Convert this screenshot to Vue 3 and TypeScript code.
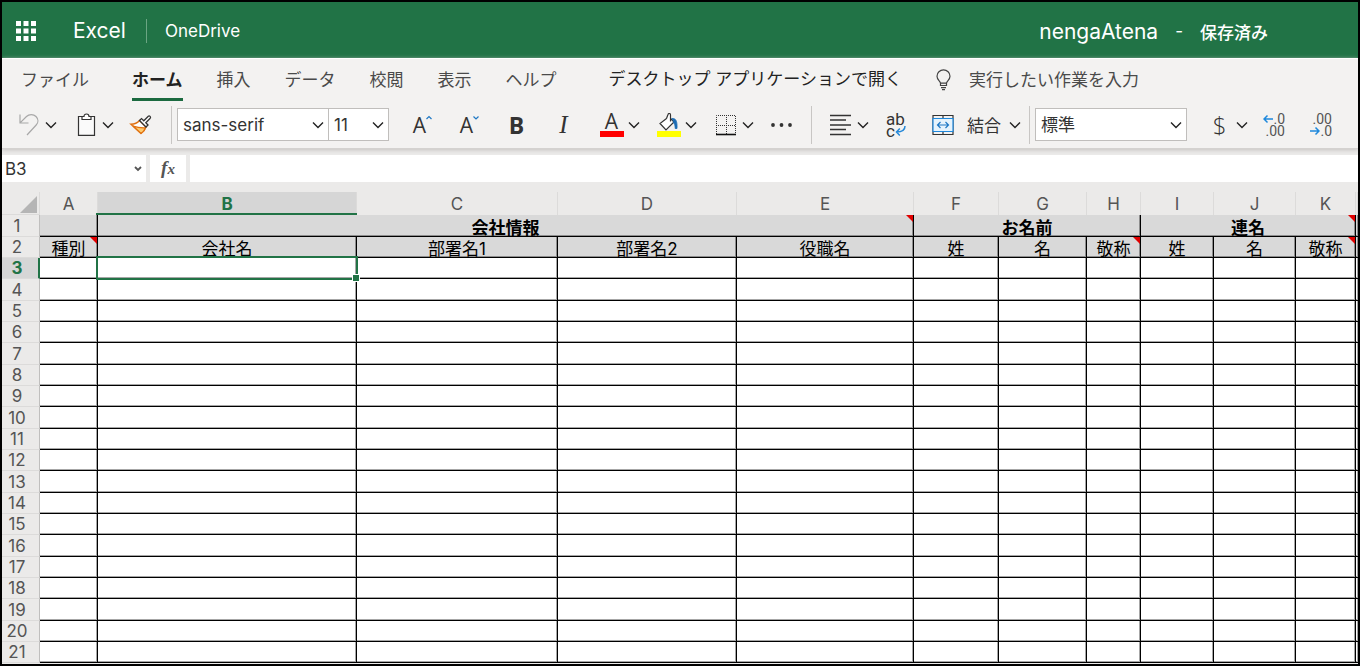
<script setup lang="ts">
import { ref } from 'vue'

interface HeadCell {
  text: string
  span: number
  note?: boolean
}

const tabs = ['ファイル', 'ホーム', '挿入', 'データ', '校閲', '表示', 'ヘルプ']
const activeTab = ref('ホーム')
const fontName = ref('sans-serif')
const fontSize = ref('11')
const format = ref('標準')
const cellName = ref('B3')
const formula = ref('')
const query = ref('')

const columns = ['A', 'B', 'C', 'D', 'E', 'F', 'G', 'H', 'I', 'J', 'K', '']
const groups: HeadCell[] = [
  { text: '', span: 1 },
  { text: '会社情報', span: 4, note: true },
  { text: 'お名前', span: 3 },
  { text: '連名', span: 3, note: true },
  { text: '', span: 1 },
]
const fields: HeadCell[] = [
  { text: '種別', span: 1, note: true },
  { text: '会社名', span: 1 },
  { text: '部署名1', span: 1 },
  { text: '部署名2', span: 1 },
  { text: '役職名', span: 1 },
  { text: '姓', span: 1 },
  { text: '名', span: 1 },
  { text: '敬称', span: 1, note: true },
  { text: '姓', span: 1 },
  { text: '名', span: 1 },
  { text: '敬称', span: 1, note: true },
  { text: '', span: 1 },
]
const bodyRows = Array.from({ length: 19 }, (_, i) => i + 3)
const isTall = (row: number): boolean => row % 3 === 1
</script>

<template>
  <div class="app">
    <header class="topbar">
      <button class="waffle" aria-label="アプリ起動ツール">
        <svg width="20" height="20" viewBox="0 0 20 20" fill="#fff">
          <g v-for="y in 3" :key="y">
            <rect v-for="x in 3" :key="x" :x="(x - 1) * 7.5" :y="(y - 1) * 7.5" width="5" height="5" />
          </g>
        </svg>
      </button>
      <a class="brand" href="#">Excel</a>
      <a class="drive" href="#">OneDrive</a>
      <div class="doc">
        <span class="doc-name">nengaAtena</span>
        <span class="dash">-</span>
        <span class="saved">保存済み</span>
      </div>
    </header>

    <div class="ribbon">
      <nav class="tabs">
        <button
          v-for="tab in tabs"
          :key="tab"
          class="tab"
          :class="{ active: tab === activeTab }"
          @click="activeTab = tab"
        >{{ tab }}</button>
        <a class="open" href="#">デスクトップ アプリケーションで開く</a>
        <label class="tell">
          <svg width="15" height="22" viewBox="0 0 15 22" fill="none" stroke="#444" stroke-width="1.2">
            <path d="M4.5 16.5 V14.2 C4.5 12.2 1 11 1 7.2 A6.5 6.3 0 0 1 14 7.2 C14 11 10.5 12.2 10.5 14.2 V16.5 Z M4.5 14.2 H10.5 M5 18.7 H10 M6 20.6 H9" />
          </svg>
          <input v-model="query" placeholder="実行したい作業を入力" aria-label="実行したい作業を入力" />
        </label>
      </nav>

      <div class="tools">
        <button class="split" aria-label="元に戻す">
          <svg class="icon" viewBox="0 0 24 24" fill="none" stroke="#a8a8a8" stroke-width="1.2">
            <path d="M3 1.500 V10 H11.500 M3.300 9.700 L9.500 3.500 C12 1 16.500 1 19 3.500 C21.500 6 21.500 9.500 19.200 12 L10 22" />
          </svg>
          <svg class="chev" viewBox="0 0 12 8"><path d="M1 1.500 L6 6.500 L11 1.500" /></svg>
        </button>
        <button class="split" aria-label="貼り付け">
          <svg class="icon" viewBox="0 0 24 24" fill="none" stroke="#333" stroke-width="1.2">
            <path d="M8 3.500 H4.500 V22.400 H20.500 V3.500 H17" fill="#fafafa" />
            <path d="M8 3.500 H10 C10 1.800 11 1 12.500 1 S15 1.800 15 3.500 H17 V6.500 H8 Z" fill="#fff" />
          </svg>
          <svg class="chev" viewBox="0 0 12 8"><path d="M1 1.500 L6 6.500 L11 1.500" /></svg>
        </button>
        <button class="narrow" aria-label="書式のコピー">
          <svg class="icon" viewBox="0 0 24 24" fill="none" stroke-width="1.300">
            <path d="M1.800 11.200 C5.500 11.200 8.500 10 10.500 7.500 L17 14 C16 17 14.500 19 12 20.500 Z" fill="#fff" stroke="#e07010" />
            <path d="M4 13 C8 14.500 12 15 16.500 14.800 C15.500 17.500 14 19.200 12 20.500 Z" fill="#fccb70" stroke="#e07010" />
            <path d="M10.500 7.500 L12.500 5.600 L14.800 7.800 L19.300 3.200 C20.500 2.300 22.200 4 21.200 5.200 L16.800 9.800 L19 12 L17 14 Z" fill="#fff" stroke="#333" />
          </svg>
        </button>
        <span class="rule"></span>
        <label class="pick font">
          <select v-model="fontName" aria-label="フォント"><option>sans-serif</option></select>
          <svg class="chev" viewBox="0 0 12 8"><path d="M1 1.500 L6 6.500 L11 1.500" /></svg>
        </label>
        <label class="pick size">
          <select v-model="fontSize" aria-label="フォント サイズ"><option>11</option></select>
          <svg class="chev" viewBox="0 0 12 8"><path d="M1 1.500 L6 6.500 L11 1.500" /></svg>
        </label>
        <div class="set">
          <button class="single glyph" aria-label="フォント サイズの拡大">
            A<svg class="mark" viewBox="0 0 6 20"><path d="M0.500 4 L3 1.500 L5.500 4" /></svg>
          </button>
          <button class="single glyph" aria-label="フォント サイズの縮小">
            A<svg class="mark" viewBox="0 0 6 20"><path d="M0.500 1.500 L3 4 L5.500 1.500" /></svg>
          </button>
          <button class="single bold">B</button>
          <button class="single italic">I</button>
        </div>
        <button class="split" aria-label="フォントの色">
          <span class="swatch"><span class="letter">A</span></span>
          <svg class="chev" viewBox="0 0 12 8"><path d="M1 1.500 L6 6.500 L11 1.500" /></svg>
        </button>
        <button class="split" aria-label="塗りつぶしの色">
          <svg class="icon" viewBox="0 0 24 24" fill="none" stroke="#333" stroke-width="1.200">
            <path d="M9.500 5.500 L3 10.500 L9 17 L17 9 L13.500 5.500 V2 C13.500 0 11.500 0 11 1.500 L9.500 5.500 M13.500 5.500 V8.500" fill="#fff" />
            <path d="M14.800 5.500 C18.500 5 20.500 7.500 20 15.500 H18.200 C18 11.500 17.500 10 16 9.500 L17 9 Z" fill="#1c6cb4" stroke="#1c6cb4" stroke-width="0.800" />
            <rect x="0" y="18" width="24" height="6" fill="#ff0" stroke="none" />
          </svg>
          <svg class="chev" viewBox="0 0 12 8"><path d="M1 1.500 L6 6.500 L11 1.500" /></svg>
        </button>
        <button class="split" aria-label="罫線">
          <svg class="icon" viewBox="0 0 24 24" fill="none" stroke="#333">
            <path d="M2.500 21 V2.500 H21.500 V21 M12.500 2 V21 M2 12.500 H22" stroke-dasharray="1 1" />
            <path d="M2 21.500 H22" stroke="#111" stroke-width="1.600" />
          </svg>
          <svg class="chev" viewBox="0 0 12 8"><path d="M1 1.500 L6 6.500 L11 1.500" /></svg>
        </button>
        <button class="narrow" aria-label="その他">
          <svg class="icon" viewBox="0 0 24 24" fill="#333">
            <circle cx="4" cy="12" r="1.900" /><circle cx="12.500" cy="12" r="1.900" /><circle cx="21" cy="12" r="1.900" />
          </svg>
        </button>
        <span class="rule"></span>
        <div class="set align">
          <button class="split" aria-label="配置">
            <svg class="icon" viewBox="0 0 24 24" stroke="#333" stroke-width="1.300">
              <path d="M1 2.500 H22 M1 7 H17 M1 12 H22 M1 16.500 H17 M1 21.500 H22" />
            </svg>
            <svg class="chev" viewBox="0 0 12 8"><path d="M1 1.500 L6 6.500 L11 1.500" /></svg>
          </button>
          <button class="narrow wrap" aria-label="折り返して全体を表示">
            <span>ab</span>
            <span>c<svg width="11" height="10" viewBox="0 0 11 10" fill="none" stroke="#2488d8" stroke-width="1.500">
              <path d="M10 0 C10 4 7.500 6 1.500 6 M4.800 2.600 L1.500 6 L4.800 9.400" />
            </svg></span>
          </button>
          <button class="merge">
            <svg class="icon" viewBox="0 0 24 24" fill="none" stroke="#333" stroke-width="1.200">
              <path d="M2 2.500 H22 V21.500 H2 Z M12 2.500 V6 M12 18 V21.500" />
              <path d="M2 5.500 H22 V18.500 H2 Z" fill="#e6f3fc" stroke="#1e88dc" />
              <path d="M6.500 12 H17.500 M9.500 9 L6.500 12 L9.500 15 M14.500 9 L17.500 12 L14.500 15" stroke="#1e78c4" />
            </svg>
            <span>結合</span>
            <svg class="chev" viewBox="0 0 12 8"><path d="M1 1.500 L6 6.500 L11 1.500" /></svg>
          </button>
        </div>
        <span class="rule tight"></span>
        <label class="pick format">
          <select v-model="format" aria-label="表示形式"><option>標準</option></select>
          <svg class="chev" viewBox="0 0 12 8"><path d="M1 1.500 L6 6.500 L11 1.500" /></svg>
        </label>
        <div class="set numbers">
          <button class="split" aria-label="通貨">
            <span class="dollar">$</span>
            <svg class="chev" viewBox="0 0 12 8"><path d="M1 1.500 L6 6.500 L11 1.500" /></svg>
          </button>
          <button class="narrow digits" aria-label="小数点以下の表示桁数を増やす">
            <span><svg width="10" height="10" viewBox="0 0 10 10"><path d="M10 5 H1 M4.500 1.500 L1 5 L4.500 8.500" /></svg>.0</span>
            <span>.00</span>
          </button>
          <button class="narrow digits" aria-label="小数点以下の表示桁数を減らす">
            <span>.00</span>
            <span><svg width="10" height="10" viewBox="0 0 10 10"><path d="M0 5 H9 M5.500 1.500 L9 5 L5.500 8.500" /></svg>.0</span>
          </button>
        </div>
      </div>
    </div>

    <div class="formula">
      <label class="name">
        <input v-model="cellName" aria-label="名前ボックス" />
        <svg width="8" height="6" viewBox="0 0 8 6" fill="none" stroke="#555" stroke-width="1.800"><path d="M1 1 L4 4 L7 1" /></svg>
      </label>
      <button class="fx" aria-label="関数の挿入"><i>f</i><i class="x">x</i></button>
      <input v-model="formula" class="entry" aria-label="数式バー" />
    </div>

    <main class="sheet">
      <table>
        <colgroup>
          <col class="c-row" />
          <col v-for="(c, i) in columns" :key="i" :class="'c-' + (c || 'rest')" />
        </colgroup>
        <thead>
          <tr>
            <th class="corner">
              <svg width="19" height="19" viewBox="0 0 19 19"><path d="M18 1 V18 H1 Z" fill="#b5b5b5" /></svg>
            </th>
            <th v-for="(c, i) in columns" :key="i" class="col" :class="{ picked: c === 'B' }" scope="col">{{ c }}</th>
          </tr>
        </thead>
        <tbody>
          <tr class="tall">
            <th class="row" scope="row">1</th>
            <td v-for="(g, i) in groups" :key="i" class="head strong" :colspan="g.span">
              <div class="clip">{{ g.text }}</div>
              <span v-if="g.note" class="note"></span>
            </td>
          </tr>
          <tr>
            <th class="row" scope="row">2</th>
            <td v-for="(f, i) in fields" :key="i" class="head">
              <div class="clip">{{ f.text }}</div>
              <span v-if="f.note" class="note"></span>
            </td>
          </tr>
          <tr v-for="r in bodyRows" :key="r" :class="{ tall: isTall(r) }">
            <th class="row" :class="{ picked: r === 3 }" scope="row">{{ r }}</th>
            <td v-for="(c, i) in columns" :key="i">
              <span v-if="r === 3 && c === 'B'" class="cursor"></span>
            </td>
          </tr>
        </tbody>
      </table>
    </main>
  </div>
</template>

<style>
body {
  margin: 0;
  background: #000;
}
</style>

<style scoped>
* {
  box-sizing: border-box;
}
.app {
  height: 100vh;
  display: flex;
  flex-direction: column;
  border: 2px solid #000;
  overflow: hidden;
  background: #ebeae9;
  color: #333;
  font-family: Inter, "Noto Sans CJK JP", sans-serif;
  font-size: 17px;
}
button,
input,
select {
  margin: 0;
  padding: 0;
  border: 0;
  border-radius: 0;
  background: none;
  color: inherit;
  font: inherit;
  outline: none;
}
a {
  color: inherit;
  text-decoration: none;
}
svg {
  display: block;
  flex: none;
}
.topbar {
  flex: none;
  display: flex;
  align-items: center;
  height: 56px;
  padding: 2px 90px 0 14px;
  background: #217346;
  color: #fff;
  white-space: nowrap;
}
.brand {
  margin-left: 37px;
  padding-right: 20px;
  font-size: 21px;
  line-height: 24px;
  border-right: 1px solid #6ba583;
}
.drive {
  margin-left: 18px;
}
.doc {
  display: flex;
  align-items: center;
  gap: 17px;
  margin-left: auto;
}
.doc-name {
  font-size: 21px;
}
.saved {
  font-weight: 500;
}
.ribbon {
  flex: none;
  background: #f3f2f1;
  border-top: 1px solid #fff;
  border-bottom: 1px solid #d4d2d0;
  box-shadow: 0 1px 4px #c4c2c0;
  z-index: 1;
}
.tabs {
  display: flex;
  gap: 34px;
  height: 42px;
  padding-left: 19px;
  white-space: nowrap;
  color: #4a4a4a;
}
.tab {
  height: 42px;
  border-bottom: 3px solid transparent;
}
.tab:first-child {
  margin-right: 9px;
}
.tab.active {
  font-weight: 700;
  color: #222;
  border-color: #1b6a40;
}
.open {
  margin-left: 18px;
  line-height: 40px;
  color: #222;
}
.tell {
  display: flex;
  flex: 1;
  align-items: center;
  gap: 18px;
}
.tell input {
  flex: 1;
  min-width: 0;
}
.tell input::placeholder {
  color: #4a4a4a;
  opacity: 1;
}
.tools {
  display: flex;
  align-items: center;
  height: 47px;
  padding-left: 6px;
}
.tools button {
  flex: none;
  display: flex;
  align-items: center;
  justify-content: center;
  height: 32px;
}
.set {
  display: flex;
  flex: none;
  margin: 0 4px 0 10px;
}
.set.align {
  margin: 0 0 0 8px;
}
.set.numbers {
  margin: 0 0 0 12px;
}
.tools .split {
  width: 57px;
  gap: 4px;
}
.tools .narrow {
  width: 38px;
}
.tools .single {
  width: 47px;
}
.icon {
  width: 24px;
  height: 24px;
}
.chev {
  width: 12px;
  height: 8px;
  fill: none;
  stroke: #222;
  stroke-width: 1.4;
}
.rule {
  flex: none;
  width: 1px;
  height: 38px;
  margin: 0 5px 0 11px;
  background: #c8c6c4;
}
.rule + .align {
  margin-left: 3px;
}
.rule.tight {
  margin-left: 0;
}
.pick {
  flex: none;
  display: grid;
  align-items: center;
  height: 33px;
  background: #fff;
  border: 1px solid #c0bebc;
}
.pick select {
  grid-area: 1 / 1;
  width: 100%;
  height: 31px;
  padding-left: 5px;
  appearance: none;
}
.pick .chev {
  grid-area: 1 / 1;
  justify-self: end;
  margin-right: 4px;
  pointer-events: none;
}
.pick.font {
  width: 152px;
}
.pick.size {
  width: 60px;
  border-left: 0;
}
.pick.format {
  width: 152px;
}
.glyph {
  font-family: "Open Sans", "Noto Sans", sans-serif;
  font-size: 21px;
}
.mark {
  width: 6px;
  height: 20px;
  fill: none;
  stroke: #1e78c4;
  stroke-width: 1.2;
}
.tools .bold {
  font-family: "Open Sans", "Noto Sans", sans-serif;
  font-size: 23px;
  font-weight: 700;
}
.tools .italic {
  font-family: "Liberation Serif", serif;
  font-size: 25px;
  font-style: italic;
}
.swatch {
  width: 24px;
  height: 24px;
  border-bottom: 6px solid #f00;
  text-align: center;
}
.letter {
  display: block;
  font-family: "Open Sans", "Noto Sans", sans-serif;
  font-size: 21px;
  line-height: 16px;
}
.tools .wrap {
  flex-direction: column;
  font-family: Roboto, sans-serif;
  font-size: 17px;
  line-height: 12px;
}
.wrap span {
  display: flex;
  align-items: center;
  width: 20px;
}
.tools .merge {
  gap: 8px;
  padding: 0 8px 0 16px;
}
.merge span {
  margin-left: 4px;
}
.dollar {
  width: 24px;
  font-family: "Open Sans", "Noto Sans", sans-serif;
  font-size: 24px;
  font-weight: 300;
  text-align: center;
}
.tools .digits {
  flex-direction: column;
  align-items: flex-end;
  padding-right: 9px;
  color: #555;
  font-family: Roboto, sans-serif;
  font-size: 14px;
  line-height: 12px;
}
.digits + .digits {
  margin-left: 9px;
}
.digits span {
  display: flex;
  align-items: center;
}
.digits path {
  fill: none;
  stroke: #1e88dc;
  stroke-width: 1.5;
}
.formula {
  flex: none;
  display: flex;
  gap: 4px;
  height: 33px;
  padding-top: 6px;
}
.name {
  display: flex;
  align-items: center;
  width: 144px;
  padding: 0 4px 0 3px;
  background: #fff;
}
.name input {
  flex: 1;
  min-width: 0;
}
.fx {
  width: 36px;
  background: #fff;
  color: #555;
  font-family: "Liberation Serif", serif;
  font-size: 19px;
  font-weight: 700;
  line-height: 24px;
}
.fx .x {
  font-size: 15px;
}
.entry {
  flex: 1;
  background: #fff;
}
.sheet {
  flex: 1;
  min-height: 0;
  padding-top: 10px;
  overflow: hidden;
}
table {
  width: 100%;
  table-layout: fixed;
  border-collapse: separate;
  border-spacing: 0;
}
.c-row { width: 38px; }
.c-A { width: 58px; }
.c-B { width: 259px; }
.c-C { width: 201px; }
.c-D { width: 179px; }
.c-E { width: 177px; }
.c-F { width: 85px; }
.c-G { width: 88px; }
.c-H { width: 54px; }
.c-I { width: 73px; }
.c-J { width: 82px; }
.c-K { width: 60px; }
th,
td {
  position: relative;
  height: 21px;
  padding: 0;
  line-height: 20px;
}
.tall th,
.tall td {
  height: 22px;
}
td {
  background: #fff;
  border-right: 1px solid #000;
  border-bottom: 1px solid #000;
  box-shadow: inset -1px -1px 0 rgba(0, 0, 0, 0.35);
}
td:last-child {
  border-right: 0;
}
th {
  font-weight: 400;
  color: #555;
}
thead th {
  height: 23px;
  line-height: 22px;
  border-right: 1px solid #dcdbda;
}
thead .corner {
  border-bottom: 1px solid #dcdbda;
}
.corner svg {
  margin: 2px 0 0 17px;
}
th.row {
  padding-right: 7px;
  border-right: 1px solid #c0bfbe;
  border-bottom: 1px solid #dcdbda;
}
th.picked {
  background: #d6d6d6;
  color: #217346;
  font-weight: 700;
}
th.col.picked::after {
  content: "";
  position: absolute;
  left: -2px;
  right: -1px;
  bottom: 0;
  height: 2px;
  background: #217346;
}
th.row.picked {
  padding-right: 6px;
  border-right: 2px solid #217346;
}
.head {
  background: #d9d9d9;
  color: #000;
  text-align: center;
}
.strong {
  font-weight: 700;
}
.clip {
  height: 20px;
  padding-top: 2px;
  overflow: hidden;
}
.strong .clip {
  height: 21px;
  padding-top: 3px;
}
.note {
  position: absolute;
  top: 0;
  right: 0;
  border-top: 7px solid #e00000;
  border-left: 7px solid transparent;
}
.cursor {
  position: absolute;
  inset: -2px -2px -2px -2px;
  border: 2px solid #217346;
  z-index: 2;
}
.cursor::after {
  content: "";
  position: absolute;
  right: -4px;
  bottom: -4px;
  width: 6px;
  height: 6px;
  background: #217346;
  border: 1px solid #fff;
}
</style>
